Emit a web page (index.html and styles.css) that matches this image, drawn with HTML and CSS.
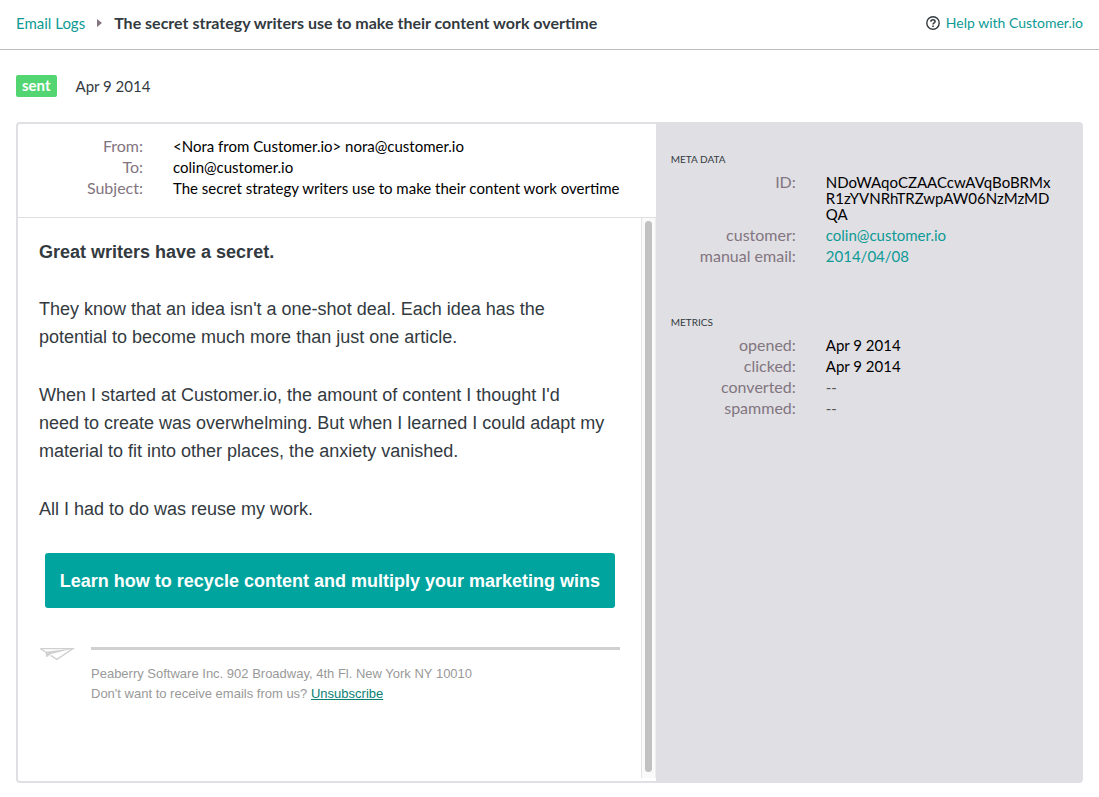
FILE: index.html
```html
<!DOCTYPE html>
<html lang="en">
<head>
  <meta charset="UTF-8" />
  <meta name="viewport" content="width=device-width, initial-scale=1.0"/>
  <title>Email Logs</title>
  <link rel="stylesheet" href="styles.css">
</head>
<body>
  <header class="topbar">
    <nav class="breadcrumb">
      <a href="#">Email Logs</a>
      <svg class="arrow" width="5" height="8" viewBox="0 0 5 8"><path d="M0 0L5 4L0 8Z" fill="#82757f"/></svg>
      <h1>The secret strategy writers use to make their content work overtime</h1>
    </nav>
    <div class="help">
      <svg width="14" height="14" viewBox="0 0 14 14" fill="none" stroke="#333a3f" stroke-width="1.4">
        <circle cx="7" cy="7" r="6.2"/>
        <path d="M4.9 5.7C4.9 4.4 5.8 3.7 7 3.7S9.1 4.5 9.1 5.5C9.1 6.8 7 6.8 7 8.4" stroke-width="1.5"/>
        <path d="M7 9.4V10.9" stroke-width="1.6"/>
      </svg>
      <a href="#">Help with Customer.io</a>
    </div>
  </header>

  <div class="status">
    <span class="badge">sent</span>
    <span>Apr 9 2014</span>
  </div>

  <div class="card">
    <main class="email">
      <dl class="details envelope">
        <dt>From:</dt>
        <dd>&lt;Nora from Customer.io&gt; nora@customer.io</dd>
        <dt>To:</dt>
        <dd>colin@customer.io</dd>
        <dt>Subject:</dt>
        <dd>The secret strategy writers use to make their content work overtime</dd>
      </dl>

      <div class="preview">
        <article class="message">
          <h2>Great writers have a secret.</h2>
          <p>They know that an idea isn't a one-shot deal. Each idea has the<br> potential to become much more than just one article.</p>
          <p>When I started at Customer.io, the amount of content I thought I'd<br> need to create was overwhelming. But when I learned I could adapt my<br> material to fit into other places, the anxiety vanished.</p>
          <p>All I had to do was reuse my work.</p>
          <a class="cta" href="#">Learn how to recycle content and multiply your marketing wins</a>

          <footer class="message-footer">
            <svg width="36" height="14" viewBox="0 0 36 14" fill="none" stroke="#d0d0d0" stroke-width="1.3">
              <path d="M1.5 1.6H34L18 12.4L11.5 8.4"/>
              <path d="M1.5 1.6L7 5.2"/>
              <path d="M34 1.6L6.5 4.8L7.2 10.6L12 7Z" fill="#d0d0d0" stroke="none"/>
            </svg>
            <div class="address">
              Peaberry Software Inc. 902 Broadway, 4th Fl. New York NY 10010<br>
              Don't want to receive emails from us? <a href="#">Unsubscribe</a>
            </div>
          </footer>
        </article>
        <div class="scrollbar"><div class="thumb"></div></div>
      </div>
    </main>

    <aside class="sidebar">
      <section>
        <h3>META DATA</h3>
        <dl class="details">
          <dt>ID:</dt>
          <dd>NDoWAqoCZAACcwAVqBoBRMx<wbr>R1zYVNRhTRZwpAW06NzMzMD<wbr>QA</dd>
          <dt>customer:</dt>
          <dd><a href="#">colin@customer.io</a></dd>
          <dt>manual email:</dt>
          <dd><a href="#">2014/04/08</a></dd>
        </dl>
      </section>
      <section>
        <h3>METRICS</h3>
        <dl class="details">
          <dt>opened:</dt>
          <dd>Apr 9 2014</dd>
          <dt>clicked:</dt>
          <dd>Apr 9 2014</dd>
          <dt>converted:</dt>
          <dd class="empty">--</dd>
          <dt>spammed:</dt>
          <dd class="empty">--</dd>
        </dl>
      </section>
    </aside>
  </div>
</body>
</html>
```
FILE: styles.css
```css
* {
  box-sizing: border-box;
}

body {
  display: flex;
  flex-direction: column;
  min-height: 100vh;
  margin: 0;
  font-family: Lato, sans-serif;
  font-size: 15px;
  line-height: 16px;
  color: #333a3f;
  background: #fff;
}

h1, h2, h3, p, dl, dd {
  margin: 0;
}

a {
  color: #0d9a94;
  text-decoration: none;
}

.topbar {
  display: flex;
  align-items: center;
  justify-content: space-between;
  height: 50px;
  padding: 0 16px 4px;
  border-bottom: 1px solid #bbb;
}

.breadcrumb {
  display: flex;
  align-items: center;
  gap: 12px;
}

.breadcrumb h1 {
  font-size: 16px;
  font-weight: 700;
}

.help {
  display: flex;
  align-items: center;
  gap: 6px;
  font-size: 14px;
}

.status {
  display: flex;
  align-items: center;
  gap: 19px;
  padding: 25px 16px;
}

.badge {
  padding: 2px 6px 4px;
  border-radius: 2px;
  color: #fff;
  background: #53d571;
  font-weight: 700;
}

.card {
  display: flex;
  flex: 1;
  margin: 0 16px 14px;
  border: 2px solid #e0dfe4;
  border-radius: 4px;
}

.email {
  display: flex;
  flex-direction: column;
  width: 60%;
}

.details {
  display: grid;
  grid-template-columns: 125px 1fr;
  gap: 5px 30px;
  color: #000;
}

.details dt {
  text-align: right;
  font-size: 16px;
  color: #82757f;
}

.details .empty {
  color: #555;
}

.envelope {
  padding: 14px 0 21px;
  border-bottom: 1px solid #e0dfe4;
}

.preview {
  display: flex;
  flex: 1;
  padding-bottom: 3px;
}

.message {
  flex: 1;
  padding: 20px 21px;
  font-family: "Liberation Sans", Arial, sans-serif;
  font-size: 18px;
  line-height: 28px;
}

.message h2 {
  margin-bottom: 29px;
  font-size: 18px;
}

.message p {
  margin-bottom: 30px;
}

.cta {
  display: block;
  margin: 0 5px 39px 6px;
  padding: 14px 0 13px;
  border-radius: 3px;
  text-align: center;
  font-weight: 700;
  color: #fff;
  background: #00a49f;
}

.message-footer {
  display: flex;
  gap: 16px;
}

.address {
  flex: 1;
  padding-top: 14px;
  border-top: 3px solid #d0d0d0;
  font-size: 13px;
  line-height: 20px;
  color: #999;
}

.address a {
  color: #0d8074;
  text-decoration: underline;
}

.scrollbar {
  width: 15px;
  padding: 3px;
  border-left: 1px solid #e4e4e4;
  border-right: 1px solid #ededed;
  background: #fafafa;
  display: flex;
}

.thumb {
  width: 8px;
  margin-bottom: 3px;
  border-radius: 4px;
  background: #c1c1c1;
}

.sidebar {
  width: 40%;
  padding: 29px 20px 20px 15px;
  background: #e0dfe4;
}

.sidebar section {
  margin-bottom: 52px;
}

.sidebar h3 {
  margin-bottom: 9px;
  font-size: 10px;
  font-weight: 400;
  line-height: 12px;
}
```
